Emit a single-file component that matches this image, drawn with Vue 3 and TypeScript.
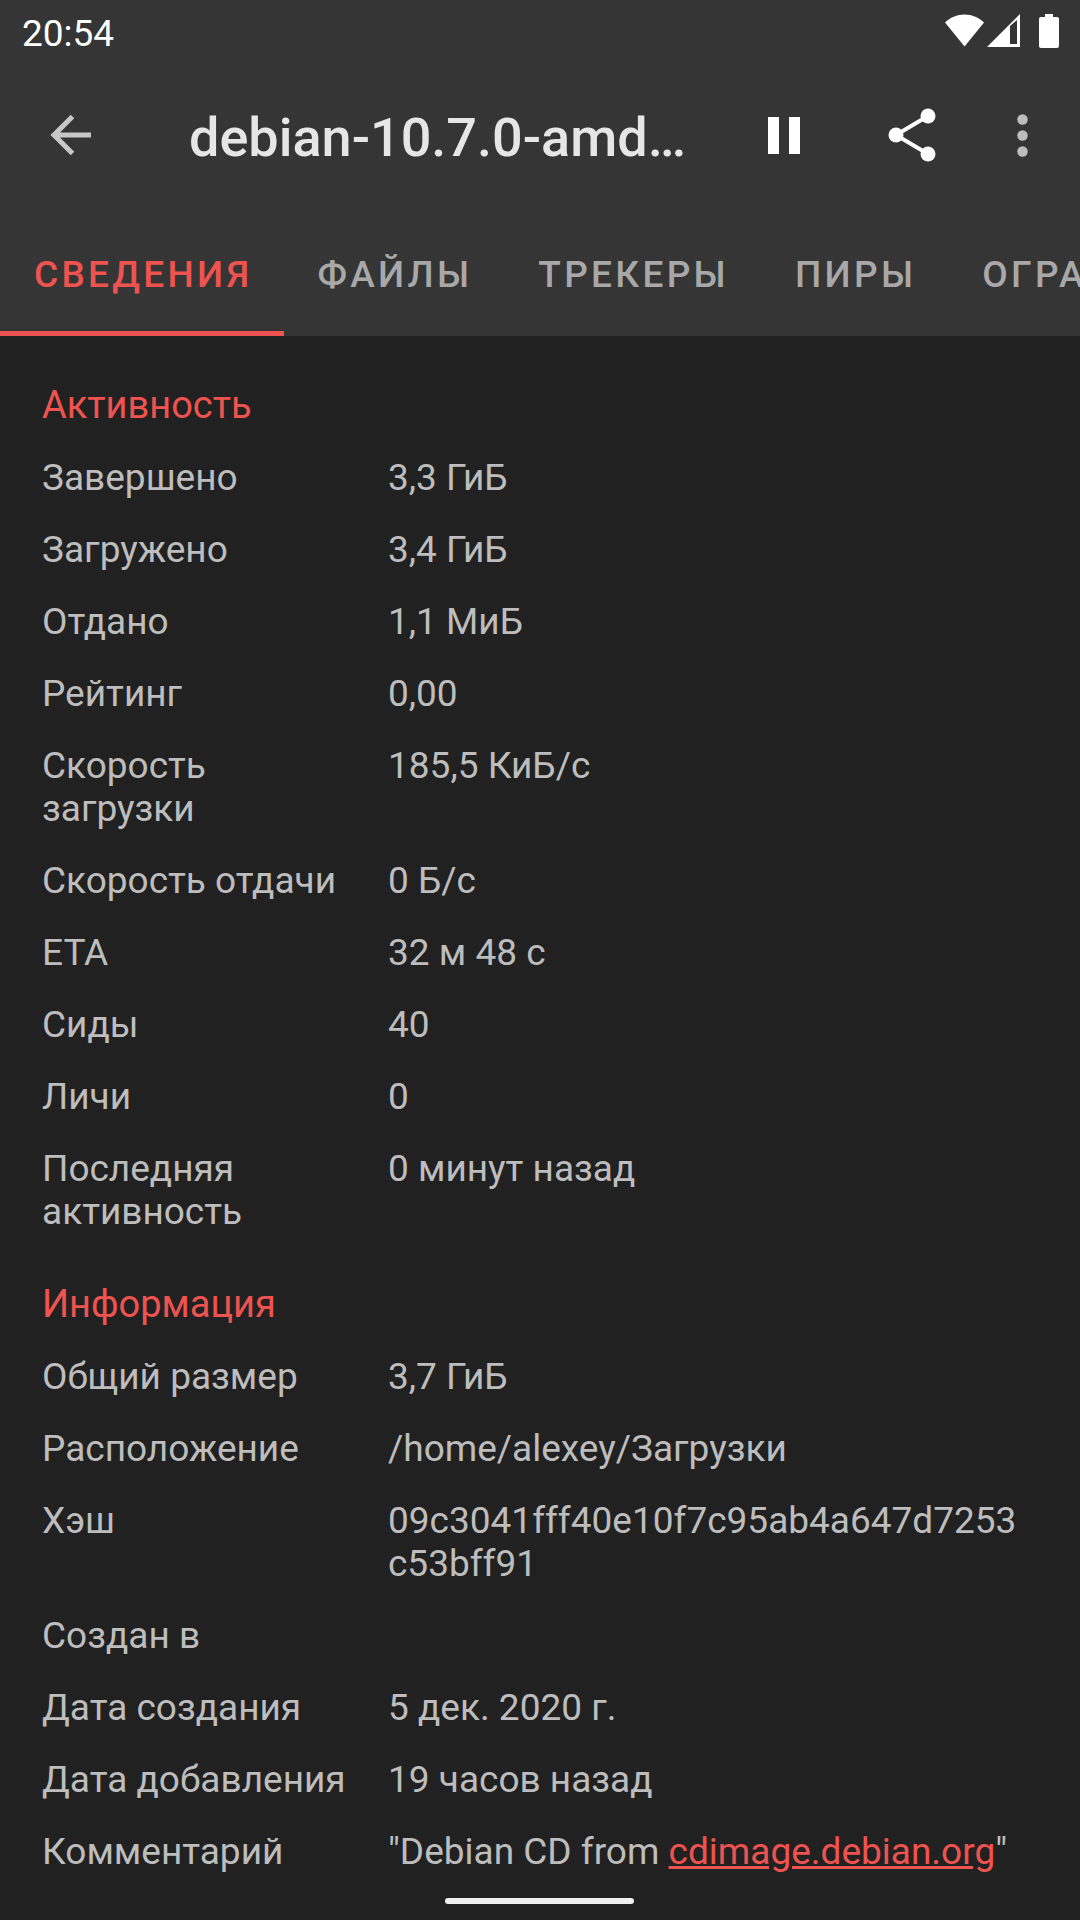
<template>
  <div class="screen">
    <header class="appbar">
      <div class="status">
        <span class="clock">20:54</span>
        <div class="status-icons">
          <svg width="39" height="33" viewBox="0 0 39 33"><path d="M0 8.5C5 3.5 12 0.5 19.5 0.5S34 3.500 39 8.500L19.500 32.500Z" fill="#fff" /></svg>
          <svg class="signal" width="33" height="33" viewBox="0 0 33 33"><path fill-rule="evenodd" d="M0 33L33 0V33ZM23 12V30H30V6Z" fill="#fff" /></svg>
          <svg class="battery" width="20" height="34" viewBox="0 0 20 34"><path d="M6 0H14V3H18Q20 3 20 5V32Q20 34 18 34H2Q0 34 0 32V5Q0 3 2 3H6Z" fill="#fff" /></svg>
        </div>
      </div>
      <div class="toolbar">
        <svg class="back" width="42" height="42" viewBox="0 0 42 42"><path d="M41 21H4M22.500 2.500L4 21L22.500 39.500" fill="none" stroke="#c8c8c8" stroke-width="5" /></svg>
        <span class="title">debian-10.7.0-amd…</span>
        <svg class="pause" width="32" height="37" viewBox="0 0 32 37"><path d="M0 0H11V37H0ZM21 0H32V37H21Z" fill="#fff" /></svg>
        <svg class="share" width="48" height="54" viewBox="0 0 48 54">
          <circle cx="8" cy="27" r="7.500" fill="#fff" />
          <circle cx="40" cy="8" r="7.500" fill="#fff" />
          <circle cx="40" cy="46" r="7.500" fill="#fff" />
          <path d="M8 27L40 8M8 27L40 46" stroke="#fff" stroke-width="4" />
        </svg>
        <svg class="more" width="11" height="43" viewBox="0 0 11 43">
          <circle cx="5.500" cy="5.500" r="5.250" fill="#bdbdbd" />
          <circle cx="5.500" cy="21.500" r="5.250" fill="#bdbdbd" />
          <circle cx="5.500" cy="37.500" r="5.250" fill="#bdbdbd" />
        </svg>
      </div>
      <nav class="tabs">
        <span v-for="(tab, i) in tabs" :key="tab" class="tab" :class="{ active: i === 0 }">{{ tab }}</span>
      </nav>
    </header>

    <main class="details">
      <section v-for="section in sections" :key="section.title" class="section">
        <h2 class="section-title">{{ section.title }}</h2>
        <div v-for="row in section.rows" :key="row.label" class="row">
          <div class="label">{{ row.label }}</div>
          <div class="value">
            {{ row.value }}<template v-if="row.link"><a class="link">{{ row.link }}</a>"</template>
          </div>
        </div>
      </section>
    </main>

    <div class="home-bar" />
  </div>
</template>

<script setup lang="ts">
interface Row {
  label: string
  value: string
  link?: string
}

const tabs = ['Сведения', 'Файлы', 'Трекеры', 'Пиры', 'Ограничения']

const sections: { title: string; rows: Row[] }[] = [
  {
    title: 'Активность',
    rows: [
      { label: 'Завершено', value: '3,3 ГиБ' },
      { label: 'Загружено', value: '3,4 ГиБ' },
      { label: 'Отдано', value: '1,1 МиБ' },
      { label: 'Рейтинг', value: '0,00' },
      { label: 'Скорость загрузки', value: '185,5 КиБ/с' },
      { label: 'Скорость отдачи', value: '0 Б/с' },
      { label: 'ETA', value: '32 м 48 с' },
      { label: 'Сиды', value: '40' },
      { label: 'Личи', value: '0' },
      { label: 'Последняя активность', value: '0 минут назад' },
    ],
  },
  {
    title: 'Информация',
    rows: [
      { label: 'Общий размер', value: '3,7 ГиБ' },
      { label: 'Расположение', value: '/home/alexey/Загрузки' },
      { label: 'Хэш', value: '09c3041fff40e10f7c95ab4a647d7253c53bff91' },
      { label: 'Создан в', value: '' },
      { label: 'Дата создания', value: '5 дек. 2020 г.' },
      { label: 'Дата добавления', value: '19 часов назад' },
      { label: 'Комментарий', value: '"Debian CD from ', link: 'cdimage.debian.org' },
    ],
  },
]
</script>

<style>
html,
body {
  margin: 0;
  background: #212121;
}
</style>

<style scoped>
.screen {
  position: relative;
  width: 1080px;
  height: 1920px;
  overflow: hidden;
  background: #212121;
  font-family: Roboto, sans-serif;
}

.appbar {
  background: #353535;
  height: 336px;
}

.status {
  display: flex;
  align-items: center;
  justify-content: space-between;
  height: 67px;
  padding: 0 21px 0 22px;
}

.clock {
  color: #fff;
  font-size: 37px;
}

.status-icons {
  display: flex;
  align-items: center;
  margin-bottom: 6px;
}

.signal {
  margin-left: 3px;
}

.battery {
  margin-left: 19px;
}

.toolbar {
  display: flex;
  align-items: center;
  height: 136px;
}

.back {
  flex: none;
  margin-left: 50px;
}

.title {
  flex: none;
  margin-left: 97px;
  padding-top: 4px;
  width: 571px;
  color: #e6e6e6;
  font-size: 54px;
  font-weight: 500;
  white-space: nowrap;
}

.pause {
  flex: none;
  margin-left: 8px;
}

.share {
  flex: none;
  margin-left: 88px;
}

.more {
  flex: none;
  margin-left: 81px;
}

.tabs {
  display: flex;
  height: 133px;
  overflow: hidden;
}

.tab {
  flex: none;
  display: flex;
  align-items: center;
  box-sizing: border-box;
  height: 133px;
  padding: 14px 33px 0;
  border-bottom: 5px solid transparent;
  color: #a8a8a8;
  font-size: 37px;
  font-weight: 500;
  letter-spacing: 3.300px;
  text-transform: uppercase;
}

.tab.active {
  padding-left: 34px;
  padding-right: 32px;
  color: #ef5350;
  border-bottom-color: #ef5350;
}

.details {
  padding-top: 33px;
}

.section {
  margin-bottom: 21px;
}

.section-title {
  margin: 0;
  padding-left: 42px;
  height: 72px;
  line-height: 72px;
  color: #ef5350;
  font-size: 38px;
  font-weight: 400;
}

.row {
  display: grid;
  grid-template-columns: 346px 1fr;
  padding: 14.500px 51px 14.500px 42px;
  color: #bdbdbd;
  font-size: 37px;
  line-height: 43px;
}

.label {
  padding-right: 36px;
}

.value {
  word-break: break-all;
}

.link {
  color: #ef5350;
  text-decoration: underline;
}

.home-bar {
  position: absolute;
  left: 445px;
  top: 1898px;
  width: 189px;
  height: 6px;
  border-radius: 3px;
  background: #f0f0f0;
}
</style>
